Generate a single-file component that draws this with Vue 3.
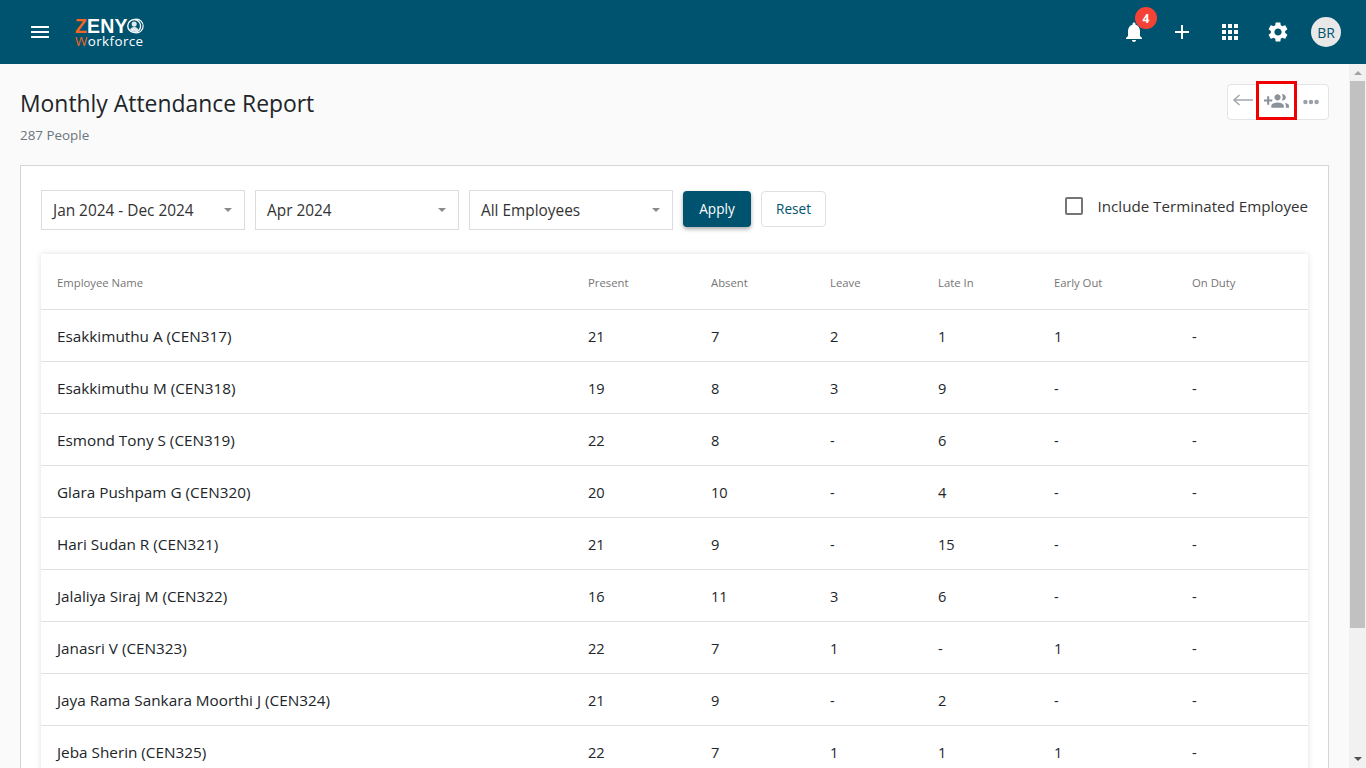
<script setup>
const columns = ['Employee Name', 'Present', 'Absent', 'Leave', 'Late In', 'Early Out', 'On Duty']
const rows = [
  ['Esakkimuthu A (CEN317)', '21', '7', '2', '1', '1', '-'],
  ['Esakkimuthu M (CEN318)', '19', '8', '3', '9', '-', '-'],
  ['Esmond Tony S (CEN319)', '22', '8', '-', '6', '-', '-'],
  ['Glara Pushpam G (CEN320)', '20', '10', '-', '4', '-', '-'],
  ['Hari Sudan R (CEN321)', '21', '9', '-', '15', '-', '-'],
  ['Jalaliya Siraj M (CEN322)', '16', '11', '3', '6', '-', '-'],
  ['Janasri V (CEN323)', '22', '7', '1', '-', '1', '-'],
  ['Jaya Rama Sankara Moorthi J (CEN324)', '21', '9', '-', '2', '-', '-'],
  ['Jeba Sherin (CEN325)', '22', '7', '1', '1', '1', '-']
]
const filters = ['Jan 2024 - Dec 2024', 'Apr 2024', 'All Employees']
</script>

<template>
  <div class="app">
    <header class="topbar">
      <div class="brand-side">
        <svg class="menu" width="24" height="24" viewBox="0 0 24 24"><path fill="#fff" d="M3 18h18v-2H3v2zm0-5h18v-2H3v2zm0-7v2h18V6H3z"/></svg>
        <div class="logo">
          <div class="logo-top">
            <span class="orange">Z</span><span class="eny">ENY</span>
            <svg class="logo-mark" width="17" height="16" viewBox="0 0 18 16">
              <circle cx="9.800" cy="8" r="7.300" fill="none" stroke="#fff" stroke-width="1.200"/>
              <circle cx="7.600" cy="8" r="6.800" fill="#00536f" stroke="#fff" stroke-width="1.400"/>
              <circle cx="7.600" cy="6" r="2.700" fill="#dfeaf0"/>
              <path fill="#dfeaf0" d="M3 12.400c.7-2.400 2.500-3.400 4.600-3.400s3.900 1 4.600 3.400c-1.200 1.100-2.800 1.700-4.600 1.700s-3.400-.6-4.600-1.700z"/>
            </svg>
          </div>
          <div class="logo-bottom"><span class="orange">W</span>orkforce</div>
        </div>
      </div>
      <div class="actions">
        <div class="action bell">
          <svg width="24" height="24" viewBox="0 0 24 24"><path fill="#fff" d="M12 22c1.100 0 2-.9 2-2h-4c0 1.100.89 2 2 2zm6-6v-5c0-3.070-1.640-5.640-4.500-6.320V4c0-.83-.67-1.500-1.500-1.500s-1.500.67-1.500 1.500v.68C7.630 5.360 6 7.920 6 11v5l-2 2v1h16v-1l-2-2z"/></svg>
          <span class="badge">4</span>
        </div>
        <div class="action">
          <svg width="24" height="24" viewBox="0 0 24 24"><path fill="#fff" d="M19 13h-6v6h-2v-6H5v-2h6V5h2v6h6v2z"/></svg>
        </div>
        <div class="action">
          <svg width="24" height="24" viewBox="0 0 24 24"><path fill="#fff" d="M4 8h4V4H4v4zm6 12h4v-4h-4v4zm-6 0h4v-4H4v4zm0-6h4v-4H4v4zm6 0h4v-4h-4v4zm6-10v4h4V4h-4zm-6 4h4V4h-4v4zm6 6h4v-4h-4v4zm0 6h4v-4h-4v4z"/></svg>
        </div>
        <div class="action">
          <svg width="24" height="24" viewBox="0 0 24 24"><path fill="#fff" d="M19.140 12.940c.04-.3.060-.61.060-.94 0-.32-.02-.64-.07-.94l2.030-1.580c.18-.14.230-.41.120-.61l-1.920-3.320c-.12-.22-.37-.29-.59-.22l-2.390.96c-.5-.38-1.030-.7-1.620-.94l-.36-2.540c-.04-.24-.24-.41-.48-.41h-3.840c-.24 0-.43.170-.47.410l-.36 2.540c-.59.240-1.130.570-1.620.94l-2.390-.96c-.22-.08-.47 0-.59.220L2.740 8.870c-.12.210-.08.470.12.610l2.030 1.580c-.05.3-.09.630-.09.940s.02.640.07.940l-2.030 1.580c-.18.140-.23.410-.12.610l1.920 3.320c.12.220.37.290.59.220l2.390-.96c.5.380 1.030.7 1.620.94l.36 2.540c.05.240.24.410.48.410h3.840c.24 0 .44-.17.470-.41l.36-2.540c.59-.24 1.130-.56 1.620-.94l2.390.96c.22.080.47 0 .59-.22l1.920-3.320c.12-.22.070-.47-.12-.61l-2.010-1.580zM12 15.600c-1.980 0-3.600-1.620-3.600-3.600s1.620-3.600 3.600-3.600 3.600 1.620 3.600 3.600-1.620 3.600-3.600 3.600z"/></svg>
        </div>
        <div class="avatar">BR</div>
      </div>
    </header>

    <div class="viewport">
      <main class="page">
        <div class="page-head">
          <div>
            <h1>Monthly Attendance Report</h1>
            <p class="count">287 People</p>
          </div>
          <div class="tools">
            <div class="tool tool-back">
              <svg width="22" height="12" viewBox="0 0 22 12"><path fill="none" stroke="#a3a8ad" stroke-width="1.500" d="M21 6H2M7.500 1L2 6l5.500 5"/></svg>
            </div>
            <div class="tool tool-add">
              <svg width="25" height="25" viewBox="0 0 24 24"><path fill="#8b9299" d="M8 10H5V7H3v3H0v2h3v3h2v-3h3v-2zm10 1c1.660 0 2.990-1.340 2.990-3S19.660 5 18 5c-.32 0-.63.050-.91.140.57.810.9 1.790.9 2.860s-.34 2.040-.9 2.860c.28.090.59.140.91.140zm-5 0c1.660 0 2.990-1.340 2.990-3S14.660 5 13 5s-3 1.340-3 3 1.340 3 3 3zm6.620 2.160c.83.730 1.380 1.660 1.380 2.840v2h3v-2c0-1.540-2.370-2.490-4.380-2.840zM13 13c-2 0-6 1-6 3v2h12v-2c0-2-4-3-6-3z"/></svg>
            </div>
            <div class="tool tool-more">
              <svg width="16" height="6" viewBox="0 0 16 6"><circle cx="2.400" cy="3" r="2.200" fill="#9aa0a6"/><circle cx="8" cy="3" r="2.200" fill="#9aa0a6"/><circle cx="13.600" cy="3" r="2.200" fill="#9aa0a6"/></svg>
            </div>
          </div>
        </div>

        <section class="card">
          <div class="filters">
            <div v-for="f in filters" :key="f" class="select">
              <span>{{ f }}</span>
              <i class="caret"></i>
            </div>
            <button class="btn primary">Apply</button>
            <button class="btn ghost">Reset</button>
            <label class="check">
              <span class="box"></span>
              <span>Include Terminated Employee</span>
            </label>
          </div>

          <div class="table">
            <div class="row head">
              <div v-for="c in columns" :key="c" class="cell">{{ c }}</div>
            </div>
            <div v-for="r in rows" :key="r[0]" class="row">
              <div v-for="(v, i) in r" :key="i" class="cell">{{ v }}</div>
            </div>
          </div>
        </section>
      </main>

      <aside class="scrollbar">
        <i class="arrow up"></i>
        <div class="track"><div class="thumb"></div></div>
        <i class="arrow down"></i>
      </aside>
    </div>
  </div>
</template>

<style>
html, body { margin: 0; overflow: hidden; }
</style>

<style scoped>
.app {
  width: 1366px;
  height: 768px;
  overflow: hidden;
  display: flex;
  flex-direction: column;
  font-family: "Open Sans", "Noto Sans", sans-serif;
  background: #fafafa;
  color: #212529;
}
.topbar {
  height: 64px;
  flex: none;
  background: #00536f;
  display: flex;
  align-items: center;
  justify-content: space-between;
  padding: 0 25px 0 28px;
}
.brand-side { display: flex; align-items: center; gap: 23px; }
.menu { display: block; }
.logo { color: #fff; width: 72px; font-family: "Liberation Sans", sans-serif; margin-top: 2px; }
.logo-top { display: flex; align-items: center; font-size: 19.500px; font-weight: 700; line-height: 16px; height: 16px; }
.eny { letter-spacing: 0.200px; }
.logo-mark { margin-left: -1px; flex: none; }
.logo-bottom { font-size: 13.400px; line-height: 13px; letter-spacing: 0.400px; font-family: "Open Sans", sans-serif; white-space: nowrap; margin-top: 1px; }
.orange { color: #f26522; }
.actions { display: flex; align-items: center; }
.action { width: 48px; height: 48px; display: flex; align-items: center; justify-content: center; position: relative; }
.action svg { display: block; }
.badge {
  position: absolute;
  top: -1px;
  left: 25px;
  width: 22px;
  height: 22px;
  border-radius: 50%;
  background: #f44336;
  color: #fff;
  font-size: 12px;
  font-weight: 700;
  display: flex;
  align-items: center;
  justify-content: center;
}
.avatar {
  width: 30px;
  height: 30px;
  margin-left: 9px;
  border-radius: 50%;
  background: #e8e8e8;
  color: #00536f;
  font-size: 14px;
  display: flex;
  align-items: center;
  justify-content: center;
}
.viewport { flex: 1; min-height: 0; display: flex; }
.page { flex: 1; min-width: 0; padding: 0 20px; overflow: hidden; }
.page-head { display: flex; justify-content: space-between; align-items: flex-start; padding-top: 20px; height: 101px; box-sizing: border-box; }
h1 { margin: 0; font-size: 22.900px; font-weight: 400; line-height: 40px; color: #212529; }
.count { margin: 2px 0 0; font-size: 13.400px; line-height: 18px; color: #6c757d; }
.tools {
  display: flex;
  width: 102px;
  height: 36px;
  box-sizing: border-box;
  border: 1px solid #e3e4e6;
  border-radius: 4px;
  background: #fff;
}
.tool { display: flex; align-items: center; justify-content: center; height: 34px; }
.tool-back { width: 28px; flex: none; padding-left: 2px; box-sizing: border-box; }
.tool-back svg { margin-top: -4px; flex: none; }
.tool-add {
  width: 41px;
  height: 39px;
  flex: none;
  box-sizing: border-box;
  margin-top: -4px;
  border: 3px solid #f00000;
  background: #fff;
  padding-right: 1px;
}
.tool-add svg { margin-top: 2px; }
.tool-more { flex: 1; padding-right: 3px; }
.card {
  border: 1px solid #d5d5d5;
  background: #fff;
  padding: 24px 20px 0;
  height: 700px;
  box-sizing: border-box;
}
.filters { display: flex; align-items: flex-start; height: 64px; }
.select {
  width: 204px;
  height: 40px;
  box-sizing: border-box;
  margin-right: 10px;
  padding: 0 12px 0 11px;
  border: 1px solid #dcdcdc;
  background: #fff;
  display: flex;
  align-items: center;
  justify-content: space-between;
  font-size: 15.400px;
  color: #333;
}
.caret {
  width: 0;
  height: 0;
  border-left: 4.500px solid transparent;
  border-right: 4.500px solid transparent;
  border-top: 4.500px solid #8a8a8a;
}
.btn {
  height: 36px;
  font-family: inherit;
  font-size: 13.600px;
  border-radius: 4px;
  margin-top: 1px;
  padding: 0 0 2px;
}
.primary {
  width: 68px;
  border: 0;
  background: #00536f;
  color: #fff;
  box-shadow: 0 2px 4px rgba(0, 0, 0, .35);
}
.ghost {
  width: 65px;
  margin-left: 10px;
  border: 1px solid #e0e0e0;
  background: #fff;
  color: #00536f;
}
.check {
  margin-left: auto;
  display: flex;
  align-items: center;
  gap: 15px;
  font-size: 15.150px;
  color: #333;
  height: 32px;
}
.box {
  width: 18px;
  height: 18px;
  box-sizing: border-box;
  border: 2px solid #757575;
  border-radius: 2px;
}
.table {
  box-shadow: 0 0 6px rgba(0, 0, 0, .12);
  background: #fff;
}
.row {
  display: grid;
  grid-template-columns: 531px 123px 119px 108px 116px 138px 132px;
  height: 52px;
  box-sizing: border-box;
  border-bottom: 1px solid #e0e0e0;
  align-items: center;
  font-size: 14.600px;
  color: #212529;
}
.row .cell:first-child { font-size: 15.300px; }
.row.head { height: 56px; color: #757575; }
.row.head .cell, .row.head .cell:first-child { font-size: 11.300px; }
.cell { padding: 1px 0 0 16px; white-space: nowrap; }
.scrollbar {
  width: 17px;
  flex: none;
  background: #f1f1f1;
  display: flex;
  flex-direction: column;
  align-items: center;
}
.arrow { width: 0; height: 0; flex: none; border-left: 4px solid transparent; border-right: 4px solid transparent; }
.arrow.up { border-bottom: 4px solid #a3a3a3; margin: 7px 0 6px; }
.arrow.down { border-top: 4px solid #505050; margin: 6px 0 7px; }
.track { flex: 1; width: 100%; }
.thumb { height: 547px; margin: 0 1px; background: #c1c1c1; }
</style>
